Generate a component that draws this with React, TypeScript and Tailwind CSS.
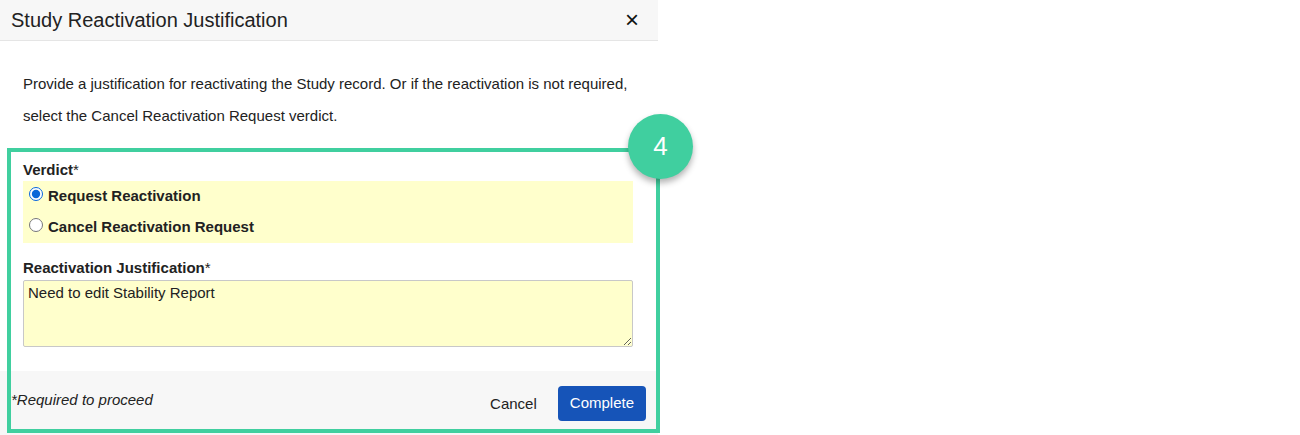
import { useState } from "react";

// Diálogo de reactivación con el recuadro de ayuda (paso 4) encima.
export default function App() {
  const [verdict, setVerdict] = useState<"request" | "cancel">("request");
  const [justification, setJustification] = useState("Need to edit Stability Report");

  return (
    <div
      className="relative h-[435px] w-[1300px] overflow-hidden bg-white text-[#222]"
      style={{ fontFamily: '"Liberation Sans", Arial, sans-serif' }}
    >
      <div className="flex w-[658px] flex-col">
        {/* Cabecera */}
        <div className="flex h-[41px] items-center justify-between border-b border-[#e5e5e5] bg-[#f7f7f7] pl-[11px] pr-[19px]">
          <h2 className="text-[20px] text-[#222]">Study Reactivation Justification</h2>
          <button className="text-[24px] leading-none text-[#111]">×</button>
        </div>

        {/* Cuerpo */}
        <div className="px-[23px] pt-[27px]">
          <p className="text-[15px] leading-[32px] text-[#222]">
            Provide a justification for reactivating the Study record. Or if the reactivation is not required,
            select the Cancel Reactivation Request verdict.
          </p>

          <div className="mt-[28px] w-[610px]">
            <p className="text-[15px] font-bold leading-[20px]">
              Verdict<span className="font-normal">*</span>
            </p>
            <div className="mt-[1px] flex flex-col bg-[#ffffcc] px-[6px]">
              <label className="flex h-[31px] items-center gap-[5px] text-[15px] font-bold">
                <input
                  type="radio"
                  name="verdict"
                  checked={verdict === "request"}
                  onChange={() => setVerdict("request")}
                  className="m-0 -mt-[5px] h-[14px] w-[14px] accent-[#0a66d8]"
                />
                Request Reactivation
              </label>
              <label className="flex h-[31px] items-center gap-[5px] text-[15px] font-bold">
                <input
                  type="radio"
                  name="verdict"
                  checked={verdict === "cancel"}
                  onChange={() => setVerdict("cancel")}
                  className="m-0 -mt-[5px] h-[14px] w-[14px] accent-[#0a66d8]"
                />
                Cancel Reactivation Request
              </label>
            </div>

            <p className="mt-[15px] text-[15px] font-bold leading-[20px]">
              Reactivation Justification<span className="font-normal">*</span>
            </p>
            <textarea
              value={justification}
              onChange={(e) => setJustification(e.target.value)}
              className="mt-[2px] block h-[67px] w-full rounded-[2px] border border-[#c8c8c8] bg-[#ffffcc] px-[4px] py-[1px] text-[15px] text-[#222] outline-none"
            />
          </div>
        </div>

        {/* Pie */}
        <div className="mt-[24px] flex h-[64px] items-start justify-between bg-[#f7f7f7] pl-[11px] pr-[12px] pt-[15px]">
          <p className="mt-[3px] text-[15px] italic text-[#222]">*Required to proceed</p>
          <div className="flex items-center gap-[21px]">
            <button className="mt-[1px] text-[15px] text-[#222]">Cancel</button>
            <button className="h-[35px] rounded-[4px] bg-[#1654b8] px-[12px] text-[15px] text-white">
              Complete
            </button>
          </div>
        </div>
      </div>

      {/* Recuadro resaltado del paso */}
      <div className="pointer-events-none absolute left-[7px] top-[148px] h-[285px] w-[653px] border-4 border-[#40cf9f]" />
      <div className="pointer-events-none absolute left-[628px] top-[114px] flex h-[65px] w-[65px] items-center justify-center rounded-full bg-[#40cf9f] text-[26px] text-white shadow-[0_4px_6px_rgba(0,0,0,0.3)]">
        4
      </div>
    </div>
  );
}
